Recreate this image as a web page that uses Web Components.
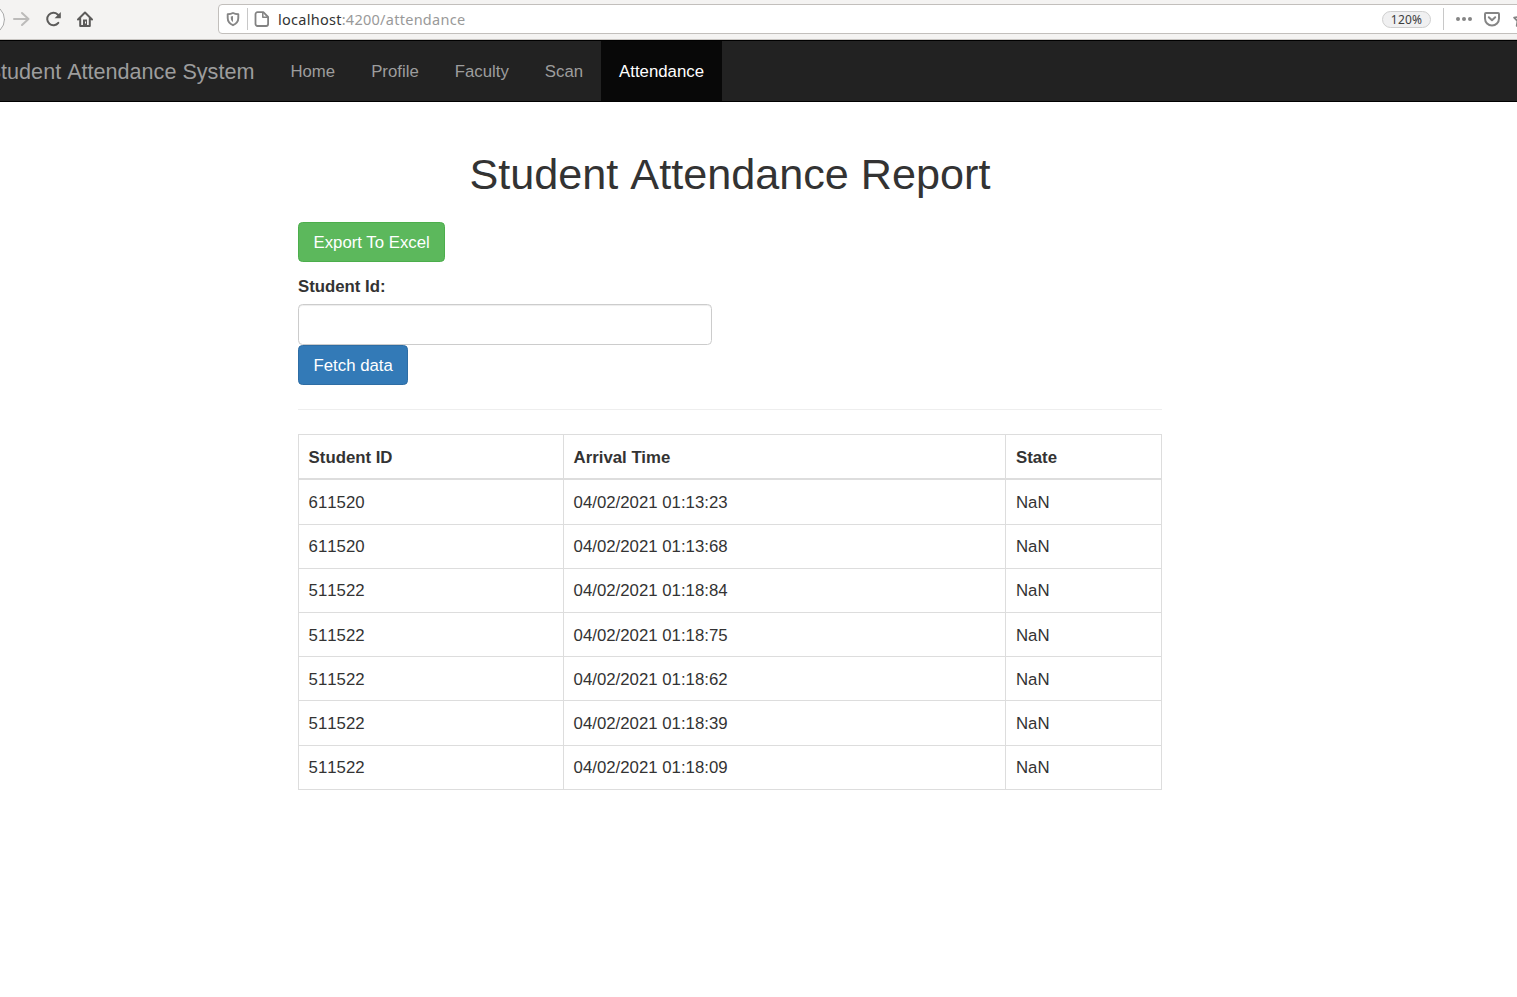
<!DOCTYPE html>
<html lang="en">
<head>
<meta charset="utf-8">
<title>Student Attendance System</title>
<style>
html,body{margin:0;height:100%;background:#fff;overflow:hidden}
body{font:16.8px/24px "Liberation Sans",Arial,sans-serif;color:#333}
</style>
</head>
<body>
<browser-bar></browser-bar>
<nav-bar brand="Student Attendance System">
  <nav-item>Home</nav-item><nav-item>Profile</nav-item><nav-item>Faculty</nav-item><nav-item>Scan</nav-item><nav-item active>Attendance</nav-item>
</nav-bar>
<report-page>
  <span slot="title">Student Attendance Report</span>
  <bs-button slot="export" kind="success">Export To Excel</bs-button>
  <bs-button slot="fetch" kind="primary">Fetch data</bs-button>
  <attendance-table slot="table"></attendance-table>
</report-page>
<script>
const define = (name, html, setup) => customElements.define(name, class extends HTMLElement {
  constructor() {
    super();
    const t = document.createElement('template');
    t.innerHTML = html;
    this.attachShadow({mode: 'open'}).append(t.content.cloneNode(true));
  }
  connectedCallback() { if (setup) setup(this, this.shadowRoot); }
});

define('browser-bar', `
<style>
:host{display:flex;height:40px;box-sizing:border-box;background:#f4f3f2;border-bottom:1px solid #c8c5c2;overflow:hidden;font-family:"Noto Sans","Open Sans",sans-serif}
svg{display:block;flex:none}
.nav{width:218px;flex:none}
.url{flex:none;width:1320px;height:30px;margin-top:4px;box-sizing:border-box;border:1px solid #c2bfbc;border-radius:4px;background:#fff;display:flex;align-items:center}
.address{font-size:14.500px;line-height:20px;color:#999;margin-left:8px;flex:none;width:200px;white-space:nowrap;letter-spacing:.270px;padding-bottom:1px}
.address b{font-weight:400;color:#333}
.zoom{margin-left:904px;flex:none;width:49px;height:17px;box-sizing:border-box;border:1px solid #cfcfcf;border-radius:9px;background:#f0f0f1;color:#3d3d3d;font-size:12px;line-height:15px;text-align:center;letter-spacing:.2px}
.sep{width:1px;height:22px;background:#c8c8c8;flex:none}
</style>
<svg class="nav" width="218" height="39" fill="none" stroke-linecap="round" stroke-linejoin="round">
  <circle cx="-10.5" cy="19.5" r="15" fill="#fbfbfb" stroke="#aaa"/>
  <path d="M14 19h14.500M22 13l6.500 6-6.500 6" stroke="#bcbbba" stroke-width="2"/>
  <path d="M58.300 22.800a6.200 6.200 0 1 1-.600-8.300l1.600 1.500" stroke="#5c5b5a" stroke-width="2"/>
  <path d="M60.800 12v6.200h-6.200z" fill="#5c5b5a"/>
  <path d="M78 19.500l7-7 7 7M80.200 18.500v7.500h9.600v-7.500" stroke="#5c5b5a" stroke-width="2"/>
  <path d="M83 25.500v-6h4v6z" fill="#5c5b5a"/><path d="M85.500 21.500v2" stroke="#f4f3f2" stroke-width="1" stroke-linecap="butt"/>
</svg>
<div class="url">
  <svg width="28" height="28" fill="none" stroke="#868686" stroke-width="1.900" stroke-linejoin="round"><path d="M14 8c-1.800 1-3.700 1.200-5.300 1.200V13c0 3.400 2 5.700 5.300 7.200 3.300-1.500 5.300-3.800 5.300-7.200V9.200C17.700 9.200 15.800 9 14 8z"/><path d="M14 11v6c-1.500-1-2.200-2.300-2.200-4v-1.600c.8 0 1.500-.1 2.200-.4z" fill="#868686" stroke="none"/></svg>
  <i class="sep"></i>
  <svg width="22" height="28" fill="none" stroke="#828282" stroke-width="1.800" stroke-linejoin="round"><path d="M9.500 7.200h5.800l4.800 4.800v7a2 2 0 0 1-2 2H9.500a2 2 0 0 1-2-2V9.200a2 2 0 0 1 2-2z"/><path d="M14.800 7.500v4.800h5" stroke-width="1.500"/></svg>
  <div class="address"><b>localhost</b>:4200/attendance</div>
  <div class="zoom">120%</div>
  <i class="sep" style="margin-left:12px"></i>
  <svg width="74" height="28" fill="none" stroke="#858585" stroke-width="2" stroke-linecap="round" stroke-linejoin="round"><g fill="#858585" stroke="none"><circle cx="14" cy="14" r="2"/><circle cx="20" cy="14" r="2"/><circle cx="26" cy="14" r="2"/></g><path d="M42 8h12a1 1 0 0 1 1 1v4.500a7 7 0 0 1-14 0V9a1 1 0 0 1 1-1zM44.800 12.300l3.200 3 3.200-3"/><path d="M77 7.500l2.100 4.400 4.800.7-3.500 3.400.8 4.800-4.200-2.300-4.300 2.300.8-4.800-3.400-3.400 4.800-.7z" stroke-width="1.800"/></svg>
</div>`);

define('nav-item', `
<style>
:host{display:block;padding:19px 18px 17px;height:24px;line-height:24px;color:#9d9d9d}
:host([active]){background:#080808;color:#fff}
</style><slot></slot>`);

define('nav-bar', `
<style>
:host{display:flex;height:62px;box-sizing:border-box;background:#222;border:solid #000;border-width:1px 0}
.brand{width:272.400px;flex:none;box-sizing:border-box;padding:19px 18px 17px 0;display:flex;justify-content:flex-end;white-space:nowrap;font-size:21.600px;line-height:24px;color:#9d9d9d;font-kerning:none}
</style><div class="brand"></div><slot></slot>`, (el, root) => {
  root.querySelector('.brand').textContent = el.getAttribute('brand');
});

define('bs-button', `
<style>
:host{display:block;width:fit-content}
button{display:block;margin:0;height:40px;box-sizing:border-box;padding:1px 14.500px 0;border:1px solid #4cae4c;border-radius:4.500px;background:#5cb85c;color:#fff;font:inherit;line-height:38px}
:host([kind=primary]) button{background:#337ab7;border-color:#2e6da4}
</style><button><slot></slot></button>`);

define('report-page', `
<style>
:host{display:block;width:864px;margin-left:298px;padding-top:49px}
h1{margin:0 0 24px;font-weight:500;font-size:43.200px;line-height:47px;text-align:center;font-kerning:none}
label{display:block;margin:13px 0 5px;font-weight:700;line-height:24px}
input{display:block;width:414px;height:41px;box-sizing:border-box;border:1px solid #ccc;border-radius:4.500px;background:#fff;box-shadow:inset 0 1px 1px rgba(0,0,0,.075);outline:0}
hr{margin:24px 0;border:0;border-top:1px solid #eee}
</style>
<h1><slot name="title"></slot></h1>
<slot name="export"></slot>
<label for="sid">Student Id:</label>
<input id="sid">
<slot name="fetch"></slot>
<hr>
<slot name="table"></slot>`);

define('attendance-table', `
<style>
:host{display:block;border:1px solid #ddd;border-bottom:0}
.row{display:grid;grid-template-columns:264px 442px 156px;height:44px;border-bottom:1px solid #ddd;box-sizing:border-box;line-height:24px}
.row>*{padding:10px 0 0 9.600px;box-sizing:border-box}
.row>*+*{border-left:1px solid #ddd}
.row>:last-child{padding-left:10px}
.row:not(.head)>:first-child{font-kerning:none}
.head{font-weight:700;height:45px;border-bottom-width:2px}
.tall{height:45px}
.low>*{padding-top:11px}
</style>`, (el, root) => {
  const rows = [['Student ID','Arrival Time','State'],['611520','04/02/2021 01:13:23','NaN'],['611520','04/02/2021 01:13:68','NaN'],['511522','04/02/2021 01:18:84','NaN'],['511522','04/02/2021 01:18:75','NaN'],['511522','04/02/2021 01:18:62','NaN'],['511522','04/02/2021 01:18:39','NaN'],['511522','04/02/2021 01:18:09','NaN']];
  const kinds = ['head low', 'tall low', '', '', 'low', 'low', 'tall low', ''];
  rows.forEach((cells, i) => {
    const row = document.createElement('div');
    row.className = 'row ' + kinds[i];
    cells.forEach(text => { const c = document.createElement('div'); c.textContent = text; row.append(c); });
    root.append(row);
  });
});
</script>
</body>
</html>
